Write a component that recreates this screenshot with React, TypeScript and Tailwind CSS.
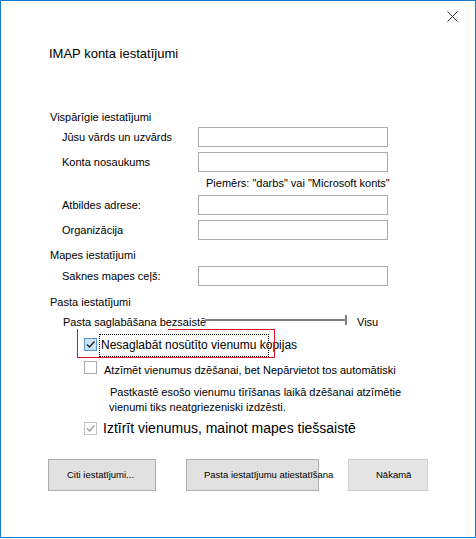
import type { ReactNode } from 'react';

type Tone = 'focus' | 'plain' | 'disabled';

function Box({ tone, checked }: { tone: Tone; checked?: boolean }) {
  const cls =
    tone === 'focus'
      ? 'border-[#5f93cc] bg-[#cce4f7]'
      : tone === 'disabled'
        ? 'border-[#c2c2c2] bg-white'
        : 'border-[#ababab] bg-white';
  const stroke = tone === 'disabled' ? '#9c9c9c' : '#1f1f1f';
  return (
    <div className={`w-[13px] h-[13px] shrink-0 border ${cls} flex items-center justify-center`}>
      {checked && (
        <svg width="11" height="11" viewBox="0 0 11 11">
          <path d="M2 5.5 L4.5 8 L9.5 2.5" fill="none" stroke={stroke} strokeWidth="1.3" />
        </svg>
      )}
    </div>
  );
}

function FieldRow({ label, className }: { label: string; className: string }) {
  return (
    <div className={`flex items-center h-[20px] ${className}`}>
      <span className="w-[150px] pl-[14px] text-[11px] leading-[14px] whitespace-nowrap">{label}</span>
      <div className="w-[190px] h-[20px] border border-[#ababab] bg-white" />
    </div>
  );
}

function Section({ children, className }: { children: ReactNode; className: string }) {
  return <div className={`ml-[2px] h-[14px] text-[11px] leading-[14px] ${className}`}>{children}</div>;
}

export default function App() {
  return (
    <div className="w-[476px] h-[538px] border border-[#1979ca] bg-white text-black font-['Liberation_Sans',Arial,sans-serif]">
      <div className="h-[30px] flex items-center justify-end pr-[17px]">
        <svg width="11" height="11" viewBox="0 0 11 11">
          <path d="M0.5 0.5 L10.5 10.5 M10.5 0.5 L0.5 10.5" stroke="#333" strokeWidth="1" />
        </svg>
      </div>

      <div className="pl-[47px]">
        <div className="mt-[15px] ml-[1px] h-[16px] text-[13px] leading-[16px]">IMAP konta iestatījumi</div>

        <Section className="mt-[48px]">Vispārīgie iestatījumi</Section>
        <FieldRow className="mt-[3px]" label="Jūsu vārds un uzvārds" />
        <FieldRow className="mt-[5px]" label="Konta nosaukums" />
        <div className="mt-[4px] ml-[158px] h-[14px] text-[11px] leading-[14px] whitespace-nowrap">
          Piemērs: "darbs" vai "Microsoft konts"
        </div>
        <FieldRow className="mt-[5px]" label="Atbildes adrese:" />
        <FieldRow className="mt-[5px]" label="Organizācija" />

        <Section className="mt-[8px]">Mapes iestatījumi</Section>
        <FieldRow className="mt-[4px]" label="Saknes mapes ceļš:" />

        <Section className="mt-[9px]">Pasta iestatījumi</Section>
        <div className="mt-[6px] flex items-center h-[14px] text-[11px] leading-[14px]">
          <span className="w-[157px] shrink-0 pl-[15px] whitespace-nowrap">Pasta saglabāšana bezsaistē</span>
          <div className="flex items-center w-[142px] mb-[4px]">
            <div className="h-[2px] flex-1 bg-[#7f7f7f]" />
            <div className="w-[2px] h-[10px] bg-[#7f7f7f]" />
          </div>
          <span className="ml-[10px]">Visu</span>
        </div>

        <div className="relative mt-[5px] flex items-center h-[23px] pl-[36px]">
          <div className="mb-[2px]">
            <Box tone="focus" checked />
          </div>
          <div className="ml-[2px] w-[170px] h-[23px] shrink-0 border border-dotted border-black flex items-center pl-[1px] whitespace-nowrap text-[12px] leading-[15px]">
            Nesaglabāt nosūtīto vienumu kopijas
          </div>
          <div className="absolute left-[29px] top-[-5px] w-[198px] h-[29px] border-x border-b border-[#e81123]">
            <div className="absolute top-0 right-[-1px] w-[107px] h-px bg-[#e81123]" />
          </div>
        </div>

        <div className="mt-[4px] flex items-center h-[13px] pl-[36px]">
          <Box tone="plain" />
          <span className="ml-[7px] pt-[4px] text-[11px] leading-[14px] whitespace-nowrap">
            Atzīmēt vienumus dzēšanai, bet Nepārvietot tos automātiski
          </span>
        </div>

        <div className="mt-[11px] ml-[62px] text-[11px] leading-[15px]">
          <div className="whitespace-nowrap">Pastkastē esošo vienumu tīrīšanas laikā dzēšanai atzīmētie</div>
          <div className="whitespace-nowrap -ml-px">vienumi tiks neatgriezeniski izdzēsti.</div>
        </div>

        <div className="mt-[5px] flex items-center h-[16px] pl-[36px]">
          <Box tone="disabled" checked />
          <span className="ml-[6px] text-[14px] leading-[16px] whitespace-nowrap">
            Iztīrīt vienumus, mainot mapes tiešsaistē
          </span>
        </div>

        <div className="mt-[23px] flex text-[9.5px] leading-[12px]">
          <button className="w-[108px] h-[32px] shrink-0 border border-[#adadad] bg-[#e1e1e1] text-left pl-[18px] whitespace-nowrap">
            Citi iestatījumi...
          </button>
          <button className="ml-[30px] w-[133px] h-[32px] shrink-0 border border-[#adadad] bg-[#e1e1e1] text-left pl-[17px] whitespace-nowrap overflow-visible">
            Pasta iestatījumu atiestatīšana
          </button>
          <button className="ml-[29px] w-[80px] h-[32px] shrink-0 border border-[#cccccc] bg-[#e5e5e5] text-left pl-[27px] whitespace-nowrap">
            Nākamā
          </button>
        </div>
      </div>
    </div>
  );
}
